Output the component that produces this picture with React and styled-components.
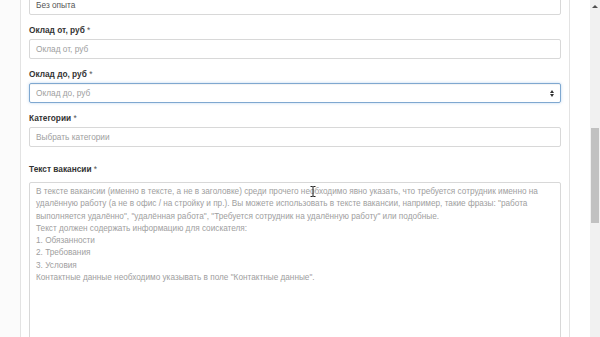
import React from "react";
import styled, { createGlobalStyle, css } from "styled-components";

const Global = createGlobalStyle`
  html, body { margin: 0; padding: 0; background: #fff; }
  body { font-family: Arial, "Liberation Sans", sans-serif; }
  #root { width: 600px; height: 337px; overflow: hidden; }
`;

const Page = styled.div`
  display: flex;
  width: 600px;
  height: 337px;
  overflow: hidden;
  background: #fff;
`;

const Gutter = styled.div`
  width: 20px;
  flex: none;
  background: #fbfbfb;
`;

const Card = styled.div`
  width: 550px;
  box-sizing: border-box;
  flex: none;
  border-left: 1px solid #e3e3e3;
  border-right: 1px solid #e3e3e3;
  padding: 0 8px;
  background: #fff;
`;

const Spacer = styled.div`
  width: 20px;
  flex: none;
`;

const Scrollbar = styled.div`
  position: relative;
  width: 10px;
  flex: none;
  background: #f1f1f1;
  display: flex;
  flex-direction: column;
  align-items: center;
`;

const ArrowUp = styled.div`
  margin-top: 5px;
  width: 0;
  height: 0;
  border-left: 3px solid transparent;
  border-right: 3px solid transparent;
  border-bottom: 3px solid #505050;
`;

const Thumb = styled.div`
  margin-top: 120px;
  width: 8px;
  height: 95px;
  background: #c1c1c1;
`;

const Field = styled.div`
  margin-bottom: 9px;
  ${(p) => p.$first && css`margin-top: -5px;`}
  ${(p) => p.$spaced && css`margin-top: 16px;`}
`;

const Label = styled.div`
  font-size: 8.3px;
  line-height: 12px;
  font-weight: bold;
  color: #333;
  margin-bottom: ${(p) => (p.$big ? 7 : 3)}px;
  span { font-weight: normal; color: #555; }
`;

const Input = styled.div`
  position: relative;
  box-sizing: border-box;
  height: 20px;
  border: 1px solid ${(p) => (p.$focus ? "#7fa8d0" : "#d8d8d8")};
  border-radius: 2px;
  padding: 0 6px;
  display: flex;
  align-items: center;
  font-size: 8.3px;
  color: ${(p) => (p.$value ? "#555" : "#a0a0a0")};
  ${(p) =>
    p.$focus &&
    css`box-shadow: 0 0 3px rgba(102, 160, 220, 0.45), inset 0 1px 1px rgba(0,0,0,0.05);`}
`;

const Spin = styled.div`
  margin-left: auto;
  margin-right: 0px;
  display: flex;
  flex-direction: column;
  gap: 1px;
  &::before, &::after {
    content: "";
    width: 0;
    height: 0;
    border-left: 2.5px solid transparent;
    border-right: 2.5px solid transparent;
  }
  &::before { border-bottom: 3px solid #333; }
  &::after { border-top: 3px solid #333; }
`;

const TextArea = styled.div`
  position: relative;
  box-sizing: border-box;
  height: 200px;
  border: 1px solid #d8d8d8;
  border-radius: 2px;
  padding: 3px 6px;
  font-size: 8.22px;
  line-height: 12.3px;
  color: #a0a0a0;
`;

const Line = styled.div`
  white-space: nowrap;
`;

const Cursor = styled.svg`
  position: absolute;
  left: 280px;
  top: 3px;
`;

const lines = [
  "В тексте вакансии (именно в тексте, а не в заголовке) среди прочего необходимо явно указать, что требуется сотрудник именно на",
  "удалённую работу (а не в офис / на стройку и пр.). Вы можете использовать в тексте вакансии, например, такие фразы: \"работа",
  "выполняется удалённо\", \"удалённая работа\", \"Требуется сотрудник на удалённую работу\" или подобные.",
  "Текст должен содержать информацию для соискателя:",
  "1. Обязанности",
  "2. Требования",
  "3. Условия",
  "Контактные данные необходимо указывать в поле \"Контактные данные\".",
];

export default function App() {
  return (
    <>
      <Global />
      <Page>
        <Gutter />
        <Card>
          <Field $first>
            <Input $value>Без опыта</Input>
          </Field>
          <Field>
            <Label>Оклад от, руб <span>*</span></Label>
            <Input>Оклад от, руб</Input>
          </Field>
          <Field>
            <Label>Оклад до, руб <span>*</span></Label>
            <Input $focus>
              Оклад до, руб
              <Spin />
            </Input>
          </Field>
          <Field>
            <Label>Категории <span>*</span></Label>
            <Input>Выбрать категории</Input>
          </Field>
          <Field $spaced>
            <Label $big>Текст вакансии <span>*</span></Label>
            <TextArea>
              {lines.map((l, i) => (
                <Line key={i}>{l}</Line>
              ))}
              <Cursor width="6" height="11" viewBox="0 0 6 11">
                <path d="M0.5 0.5h2l0.5 0.6 0.5-0.6h2M3 1v9M0.5 10.5h2l0.5-0.6 0.5 0.6h2" stroke="#222" strokeWidth="1" fill="none" />
              </Cursor>
            </TextArea>
          </Field>
        </Card>
        <Spacer />
        <Scrollbar>
          <ArrowUp />
          <Thumb />
        </Scrollbar>
      </Page>
    </>
  );
}
